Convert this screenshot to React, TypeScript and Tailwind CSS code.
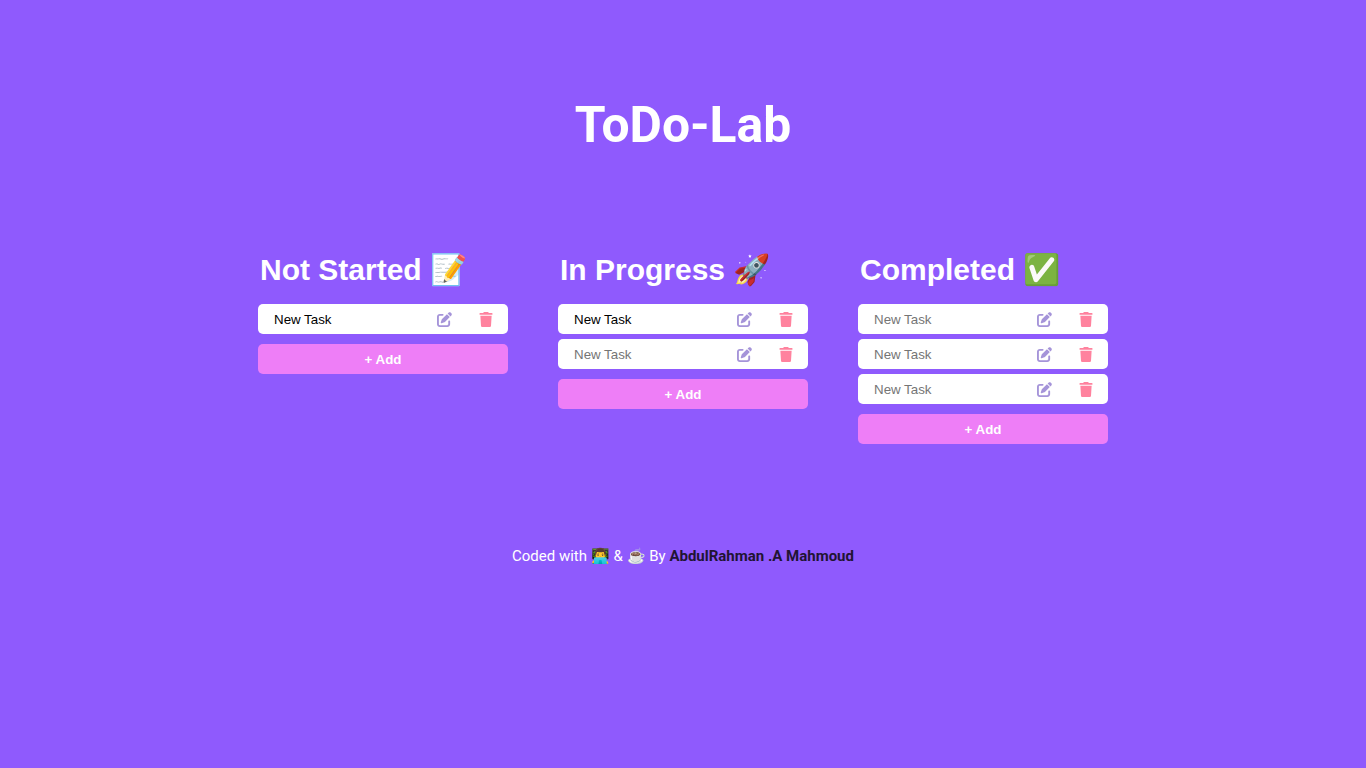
import { FaPenToSquare, FaTrash } from "react-icons/fa6";

const columns = [
  { title: "Not Started 📝", tasks: ["New Task"] },
  { title: "In Progress 🚀", tasks: ["New Task", ""] },
  { title: "Completed ✅", tasks: ["", "", ""] },
];

const TaskRow = ({ value }: { value: string }) => (
  <div className="flex h-[30px] w-[250px] items-center rounded-[5px] bg-white pl-4">
    <input
      readOnly
      value={value}
      placeholder="New Task"
      className="w-0 flex-1 bg-transparent pt-px font-['Liberation_Sans',sans-serif] text-[13.33px] text-black outline-none placeholder:text-[#757575]"
    />
    <FaPenToSquare className="mr-[27px] h-[15px] w-[15px] text-[#a594d9]" />
    <FaTrash className="mr-[15px] h-[15px] w-[14px] text-[#ff829e]" />
  </div>
);

export default function App() {
  return (
    <div className="flex min-h-[768px] flex-col items-center bg-[#8f5afd] font-['Roboto',sans-serif] text-white">
      <h1 className="mt-[94px] text-[49.8px] leading-[62px] font-bold">ToDo-Lab</h1>
      <div className="mt-[94px] flex items-start gap-[50px]">
        {columns.map((col) => (
          <div key={col.title} className="flex w-[250px] flex-col">
            <h2 className="mb-[14.4px] pl-[2px] font-['Liberation_Sans',sans-serif] text-[30px] leading-[40px] font-bold whitespace-nowrap">
              {col.title}
            </h2>
            <div className="flex flex-col gap-[5px]">
              {col.tasks.map((task, j) => (
                <TaskRow key={j} value={task} />
              ))}
            </div>
            <button
              type="button"
              className="mt-[10px] h-[30px] w-[250px] rounded-[5px] bg-[#ee7ef7] pt-px font-['Liberation_Sans',sans-serif] text-[13.33px] font-bold text-white"
            >
              + Add
            </button>
          </div>
        ))}
      </div>
      <p className="mt-[102.6px] text-[15px] leading-[18px]">
        Coded with 👨‍💻 &amp; ☕ By <strong className="text-[#211433]">AbdulRahman .A Mahmoud</strong>
      </p>
    </div>
  );
}
